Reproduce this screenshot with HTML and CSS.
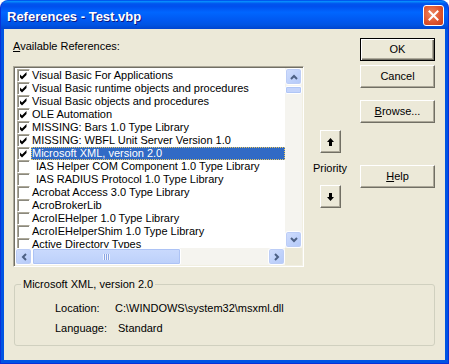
FILE: index.html
```html
<!DOCTYPE html>
<html lang="en">
<head>
  <meta charset="UTF-8">
  <title>References - Test.vbp</title>
  <link rel="stylesheet" href="styles.css">
</head>
<body>

<div class="window">
  <div class="titlebar">
    <span class="title">References - Test.vbp</span>
    <span class="close">
      <svg width="11" height="11" viewBox="0 0 11 11"><path d="M1.5 1.5 L9.5 9.5 M9.5 1.5 L1.5 9.5" stroke="#fff" stroke-width="2" stroke-linecap="square"/></svg>
    </span>
  </div>

  <div class="dialog">
    <div class="main">
      <div class="left">
        <div class="caption"><u>A</u>vailable References:</div>
        <div class="listbox">
          <div class="items">
            <div class="item"><span class="chk"><svg width="11" height="11" viewBox="0 0 11 11"><path d="M2 4.5 L4 6.5 L8.5 2 L8.5 5 L4 9.5 L2 7.5 Z"/></svg></span><span class="text">Visual Basic For Applications</span></div>
            <div class="item"><span class="chk"><svg width="11" height="11" viewBox="0 0 11 11"><path d="M2 4.5 L4 6.5 L8.5 2 L8.5 5 L4 9.5 L2 7.5 Z"/></svg></span><span class="text">Visual Basic runtime objects and procedures</span></div>
            <div class="item"><span class="chk"><svg width="11" height="11" viewBox="0 0 11 11"><path d="M2 4.5 L4 6.5 L8.5 2 L8.5 5 L4 9.5 L2 7.5 Z"/></svg></span><span class="text">Visual Basic objects and procedures</span></div>
            <div class="item"><span class="chk"><svg width="11" height="11" viewBox="0 0 11 11"><path d="M2 4.5 L4 6.5 L8.5 2 L8.5 5 L4 9.5 L2 7.5 Z"/></svg></span><span class="text">OLE Automation</span></div>
            <div class="item"><span class="chk"><svg width="11" height="11" viewBox="0 0 11 11"><path d="M2 4.5 L4 6.5 L8.5 2 L8.5 5 L4 9.5 L2 7.5 Z"/></svg></span><span class="text">MISSING: Bars 1.0 Type Library</span></div>
            <div class="item"><span class="chk"><svg width="11" height="11" viewBox="0 0 11 11"><path d="M2 4.5 L4 6.5 L8.5 2 L8.5 5 L4 9.5 L2 7.5 Z"/></svg></span><span class="text">MISSING: WBFL Unit Server Version 1.0</span></div>
            <div class="item selected"><span class="chk"><svg width="11" height="11" viewBox="0 0 11 11"><path d="M2 4.5 L4 6.5 L8.5 2 L8.5 5 L4 9.5 L2 7.5 Z"/></svg></span><span class="text">Microsoft XML, version 2.0</span></div>
            <div class="item"><span class="chk"></span><span class="text indent">IAS Helper COM Component 1.0 Type Library</span></div>
            <div class="item"><span class="chk"></span><span class="text indent">IAS RADIUS Protocol 1.0 Type Library</span></div>
            <div class="item"><span class="chk"></span><span class="text">Acrobat Access 3.0 Type Library</span></div>
            <div class="item"><span class="chk"></span><span class="text">AcroBrokerLib</span></div>
            <div class="item"><span class="chk"></span><span class="text">AcroIEHelper 1.0 Type Library</span></div>
            <div class="item"><span class="chk"></span><span class="text">AcroIEHelperShim 1.0 Type Library</span></div>
            <div class="item"><span class="chk"></span><span class="text">Active Directory Types</span></div>
          </div>

          <div class="vscroll">
            <span class="sbtn"><svg width="8" height="6" viewBox="0 0 8 6"><polyline points="1,5 4,2 7,5" fill="none" stroke="#4d6185" stroke-width="2"/></svg></span>
            <span class="vthumb"></span>
            <span class="vtrack"></span>
            <span class="sbtn"><svg width="8" height="6" viewBox="0 0 8 6"><polyline points="1,1 4,4 7,1" fill="none" stroke="#4d6185" stroke-width="2"/></svg></span>
          </div>
          <div class="hscroll">
            <span class="sbtn"><svg width="6" height="8" viewBox="0 0 6 8"><polyline points="5,1 2,4 5,7" fill="none" stroke="#4d6185" stroke-width="2"/></svg></span>
            <span class="hthumb"><span class="grip"></span></span>
            <span class="htrack"></span>
            <span class="sbtn"><svg width="6" height="8" viewBox="0 0 6 8"><polyline points="1,1 4,4 1,7" fill="none" stroke="#4d6185" stroke-width="2"/></svg></span>
          </div>
          <div class="corner"></div>
        </div>
      </div>

      <div class="middle">
        <button class="btn arrow">
          <svg width="7" height="8" viewBox="0 0 7 8"><path d="M3.5 0 L7 4 L5 4 L5 8 L2 8 L2 4 L0 4 Z"/></svg>
        </button>
        <div class="priority">Priority</div>
        <button class="btn arrow">
          <svg width="7" height="8" viewBox="0 0 7 8"><path d="M3.5 8 L7 4 L5 4 L5 0 L2 0 L2 4 L0 4 Z"/></svg>
        </button>
      </div>

      <div class="buttons">
        <button class="btn default">OK</button>
        <button class="btn cancel">Cancel</button>
        <button class="btn browse"><u>B</u>rowse...</button>
        <button class="btn help"><u>H</u>elp</button>
      </div>
    </div>

    <fieldset class="info">
      <legend>Microsoft XML, version 2.0</legend>
      <div class="row"><span class="key">Location:</span><span>C:\WINDOWS\system32\msxml.dll</span></div>
      <div class="row"><span class="key lang">Language:</span><span>Standard</span></div>
    </fieldset>
  </div>
</div>

</body>
</html>
```

FILE: styles.css
```css
* {
  box-sizing: border-box;
}
html, body {
  margin: 0;
  padding: 0;
  background: #fff;
}
body {
  font-family: 'Liberation Sans', Arial, sans-serif;
  font-size: 11px;
  line-height: 13px;
  color: #000;
}
.window {
  width: 449px;
  height: 364px;
  display: flex;
  flex-direction: column;
  background: #0054e3;
  border: 1px solid #0831d9;
  border-top-color: #0058ee;
  border-radius: 8px 8px 0 0;
}
.titlebar {
  height: 28px;
  display: flex;
  align-items: center;
  justify-content: space-between;
  padding: 0 4px 0 6px;
  border-radius: 7px 7px 0 0;
  background: linear-gradient(to bottom, #0997ff 0%, #0053ee 10%, #0050ee 20%, #0066ff 40%, #0058f0 70%, #0054e3 85%, #0045cf 100%);
}
.title {
  color: #fff;
  font-weight: bold;
  font-size: 13px;
  text-shadow: 1px 1px #0a1883;
  padding-top: 2px;
}
.close {
  width: 21px;
  height: 21px;
  display: flex;
  align-items: center;
  justify-content: center;
  border: 1px solid #fff;
  border-radius: 3px;
  background: radial-gradient(circle at 40% 40%, #ec8a63 0%, #e0552f 55%, #c83a1a 100%);
}
.dialog {
  flex: 1;
  margin: 0 3px 3px;
  padding: 9px 10px 0 9px;
  background: #ece9d8;
}
.main {
  display: flex;
  align-items: flex-start;
}
.left {
  width: 291px;
}
.caption {
  margin: 2px 0 13px;
}
.listbox {
  width: 291px;
  height: 201px;
  display: grid;
  grid-template-columns: 1fr 17px;
  grid-template-rows: 1fr 17px;
  background: #fff;
  border: 1px solid;
  border-color: #aca899 #fff #fff #aca899;
  box-shadow: inset 1px 1px #716f64, inset -1px -1px #f1efe2;
  padding: 1px;
}
.items {
  overflow: hidden;
  padding-top: 1px;
}
.item {
  height: 13px;
  display: flex;
  align-items: center;
  white-space: nowrap;
}
.chk {
  width: 13px;
  height: 13px;
  flex: none;
  margin-left: 2px;
  border: 1px solid;
  border-color: #aca899 #fff #fff #aca899;
  box-shadow: inset 1px 1px #8a887d;
  background: #fff;
}
.chk svg {
  display: block;
}
.text {
  flex: 1;
  margin-left: 1px;
  padding-left: 1px;
  height: 13px;
}
.text.indent {
  padding-left: 5px;
}
.selected .text {
  background: #316ac5;
  color: #fff;
  outline: 1px dotted #e8c860;
  outline-offset: -1px;
}
.vscroll, .hscroll {
  display: flex;
  background: #f5f4ef;
}
.vscroll {
  flex-direction: column;
}
.sbtn {
  width: 17px;
  height: 17px;
  flex: none;
  display: flex;
  align-items: center;
  justify-content: center;
  border: 1px solid #fff;
  border-radius: 3px;
  background: linear-gradient(135deg, #d2defc 0%, #c1d3fb 50%, #b4c9f8 100%);
  box-shadow: inset 0 0 0 1px #bccdf6;
}
.vthumb {
  height: 8px;
  flex: none;
  margin-top: 1px;
  border: 1px solid #fff;
  border-radius: 2px;
  background: #c4d4fb;
  box-shadow: inset 0 0 0 1px #b0c6f6;
}
.vtrack, .htrack {
  flex: 1;
}
.hthumb {
  width: 149px;
  flex: none;
  display: flex;
  align-items: center;
  justify-content: center;
  border: 1px solid #fff;
  border-radius: 2px;
  background: linear-gradient(to bottom, #cadafd, #bcd0fa);
  box-shadow: inset 0 0 0 1px #adc3f5;
}
.grip {
  width: 7px;
  height: 6px;
  background: repeating-linear-gradient(to right, #eef3fe 0 1px, #8aa5e4 1px 2px);
}
.corner {
  background: #ece9d8;
}
.middle {
  width: 52px;
  padding-top: 92px;
  display: flex;
  flex-direction: column;
  align-items: center;
}
.priority {
  margin: 9px 0 10px;
}
.buttons {
  width: 75px;
  margin-left: 4px;
  display: flex;
  flex-direction: column;
}
.btn {
  width: 75px;
  height: 23px;
  padding: 0;
  display: flex;
  align-items: center;
  justify-content: center;
  font: inherit;
  color: #000;
  background: #ece9d8;
  border: 1px solid;
  border-color: #fff #716f64 #716f64 #fff;
  box-shadow: inset -1px -1px #aca899;
}
.btn.default {
  border-color: #000;
  box-shadow: inset 1px 1px #fff, inset -1px -1px #716f64, inset -2px -2px #aca899;
}
.btn.cancel {
  margin-top: 4px;
}
.btn.browse {
  margin-top: 12px;
}
.btn.help {
  margin-top: 42px;
}
.btn.arrow {
  width: 21px;
}
.info {
  margin: 11px 0 0 1px;
  padding: 11px 0 10px 0;
  width: 421px;
  border: 1px solid #d0d0bf;
  border-radius: 3px;
}
.info legend {
  margin-left: 6px;
  padding: 0 2px;
  line-height: 13px;
}
.row {
  display: flex;
  height: 13px;
  padding-left: 40px;
}
.row + .row {
  margin-top: 7px;
}
.key {
  width: 60px;
}
.key.lang {
  width: 63px;
}
```
